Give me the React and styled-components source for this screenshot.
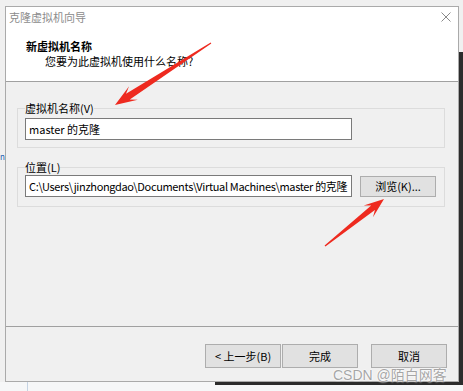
import React from "react"
import styled, { createGlobalStyle } from "styled-components"

const GlobalStyle = createGlobalStyle`
  html, body {
    margin: 0;
    padding: 0;
    background: #f6f7f8;
  }
  body {
    font-family: "Noto Sans CJK SC", "Microsoft YaHei", sans-serif;
    font-size: 11px;
  }
`

const Desktop = styled.div`
  position: relative;
  width: 463px;
  height: 391px;
  overflow: hidden;
  background: linear-gradient(#f0f0f0 0, #f0f0f0 382px, #f6f7f8 382px);
`

const BackWindow = styled.div`
  position: absolute;
  left: 215px;
  top: 52px;
  width: 300px;
  height: 333px;
  background: #2c2c2c;
`

const BackLine = styled.div`
  position: absolute;
  left: 27px;
  top: 382px;
  width: 1px;
  height: 20px;
  background: #c5d3e3;
`

const BackText = styled.span`
  position: absolute;
  left: 0;
  top: 151px;
  color: #1b5fb0;
  font-size: 8px;
  line-height: 12px;
`

const Window = styled.div`
  position: absolute;
  left: 5px;
  top: 6px;
  width: 452px;
  height: 374px;
  border: 1px solid #aaaaaa;
  display: flex;
  flex-direction: column;
  background: #f0f0f0;
`

const Header = styled.div`
  height: 74px;
  background: #ffffff;
  border-bottom: 1px solid #a0a0a0;
  display: flex;
  flex-direction: column;
`

const TitleBar = styled.div`
  height: 20px;
  display: flex;
  align-items: center;
  justify-content: space-between;
  padding: 0 7px 0 3px;
`

const Title = styled.span`
  color: #8c8c8c;
  line-height: 20px;
`

const CloseIcon = styled.svg`
  width: 10px;
  height: 10px;
`

const Heading = styled.div`
  margin-top: 12px;
  padding-left: ${(p) => p.$indent}px;
  line-height: 15px;
  font-weight: ${(p) => (p.$bold ? 700 : 400)};
  color: #000;
`

const Subheading = styled(Heading)`
  margin-top: 0;
`

const Body = styled.div`
  flex: 1;
  padding: 18px 13px 0 11px;
  display: flex;
  flex-direction: column;
  gap: 11px;
`

const Group = styled.fieldset`
  margin: 0;
  padding: ${(p) => p.$top}px 7px ${(p) => p.$bottom}px 7px;
  border: 1px solid #dcdcdc;
  min-width: 0;
`

const Legend = styled.legend`
  padding: 0;
  line-height: 16px;
  color: #000;
`

const Row = styled.div`
  display: flex;
  align-items: center;
  gap: 8px;
`

const TextBox = styled.div`
  width: 319px;
  height: 20px;
  padding: 0 3px;
  border: 1px solid #7a7a7a;
  background: #ffffff;
  color: #000;
  line-height: 20px;
  letter-spacing: ${(p) => (p.$tight ? "-0.34px" : "0")};
  white-space: nowrap;
  overflow: hidden;
`

const Button = styled.button`
  width: 76px;
  height: ${(p) => p.$h || 24}px;
  margin: 0;
  padding: 0;
  border: 1px solid #adadad;
  background: #e1e1e1;
  font-family: inherit;
  font-size: 11px;
  color: #000;
`

const Footer = styled.div`
  height: 37px;
  border-top: 1px solid #a0a0a0;
  padding: 17px 11px 0 0;
  display: flex;
  justify-content: flex-end;
  gap: 1px;
`

const Spacer = styled.div`
  width: 11px;
`

const Overlay = styled.svg`
  position: absolute;
  left: 0;
  top: 0;
  width: 463px;
  height: 391px;
  pointer-events: none;
`

const Watermark = styled.span`
  position: absolute;
  left: 333px;
  top: 366px;
  font-size: 14px;
  line-height: 18px;
  color: rgba(150, 150, 150, 0.85);
  text-shadow: 0 0 2px #fff, 0 0 2px #fff;
  font-family: "Liberation Sans", "Noto Sans CJK SC", sans-serif;
  white-space: nowrap;
`

// tapered annotation arrow, tail -> tip
const arrow = (tx, ty, px, py, headLen, headW, shaftW, tailW) => {
  const L = Math.hypot(px - tx, py - ty)
  const ux = (px - tx) / L
  const uy = (py - ty) / L
  const nx = -uy
  const ny = ux
  const at = (d, w) => [px - ux * d + nx * w, py - uy * d + ny * w]
  const pts = [
    [tx + nx * tailW, ty + ny * tailW],
    at(headLen * 0.7, shaftW),
    at(headLen, headW),
    [px, py],
    at(headLen, -headW),
    at(headLen * 0.7, -shaftW),
    [tx - nx * tailW, ty - ny * tailW],
  ]
  return pts.map((p) => p.map((v) => v.toFixed(1)).join(",")).join(" ")
}

export default function App() {
  return (
    <Desktop>
      <GlobalStyle />
      <BackWindow />
      <BackLine />
      <BackText>n</BackText>
      <Window>
        <Header>
          <TitleBar>
            <Title>克隆虚拟机向导</Title>
            <CloseIcon viewBox="0 0 10 10">
              <path d="M0.5 0.5 L9.5 9.5 M9.5 0.5 L0.5 9.5" stroke="#8a8a8a" strokeWidth="1" fill="none" />
            </CloseIcon>
          </TitleBar>
          <Heading $indent={20} $bold>新虚拟机名称</Heading>
          <Subheading $indent={39}>您要为此虚拟机使用什么名称?</Subheading>
        </Header>
        <Body>
          <Group $top={2} $bottom={7}>
            <Legend>虚拟机名称(V)</Legend>
            <TextBox>master 的克隆</TextBox>
          </Group>
          <Group $top={0} $bottom={9}>
            <Legend>位置(L)</Legend>
            <Row>
              <TextBox $tight>C:\Users\jinzhongdao\Documents\Virtual Machines\master 的克隆</TextBox>
              <Button $h={21}>浏览(K)...</Button>
            </Row>
          </Group>
        </Body>
        <Footer>
          <Button>&lt; 上一步(B)</Button>
          <Button>完成</Button>
          <Spacer />
          <Button>取消</Button>
        </Footer>
      </Window>
      <Overlay viewBox="0 0 463 391">
        <polygon points={arrow(211, 43, 115, 105, 22, 8, 3.5, 0.6)} fill="#ee2a1f" />
        <polygon points={arrow(325, 246, 384, 199, 20, 7.5, 3, 0.6)} fill="#ee2a1f" />
      </Overlay>
      <Watermark>CSDN @陌白网客</Watermark>
    </Desktop>
  )
}
